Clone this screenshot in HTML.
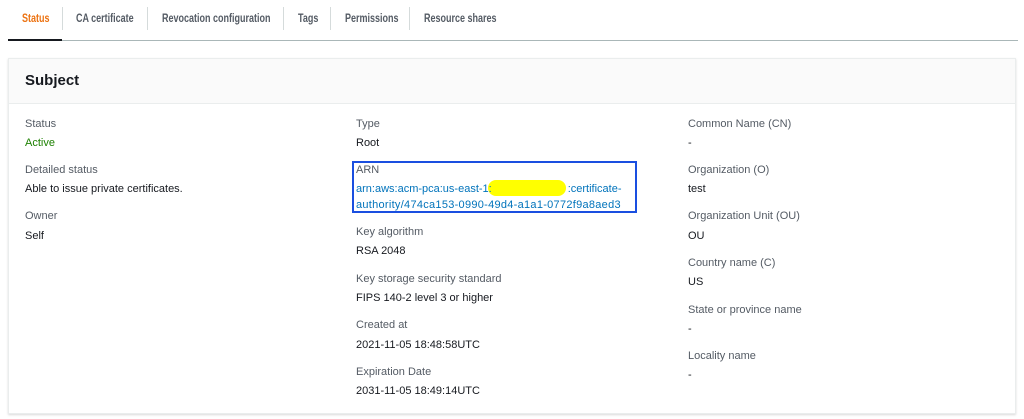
<!DOCTYPE html><html><head><style>
body{margin:0;width:1024px;height:419px;background:#fff;font-family:"Liberation Sans",sans-serif;color:#16191f;position:relative;overflow:hidden}
.a{position:absolute;white-space:nowrap}
.tab{position:absolute;top:11px;font-size:12px;font-weight:bold;color:#545b64;transform:scaleX(0.75);transform-origin:left}
.sep{position:absolute;top:7px;width:1px;height:23px;background:#d5dbdb}
.l{font-size:11px;color:#545b64}
.v{font-size:11px;color:#16191f}
</style></head><body>
<div class="tab" style="left:22px;color:#ec7211">Status</div>
<div class="sep" style="left:62px"></div>
<div class="tab" style="left:76px">CA certificate</div>
<div class="sep" style="left:147px"></div>
<div class="tab" style="left:162px">Revocation configuration</div>
<div class="sep" style="left:283px"></div>
<div class="tab" style="left:298px">Tags</div>
<div class="sep" style="left:330px"></div>
<div class="tab" style="left:345px">Permissions</div>
<div class="sep" style="left:409px"></div>
<div class="tab" style="left:424px">Resource shares</div>
<div class="a" style="left:8px;top:40px;width:1010px;height:1px;background:#aab7b8"></div>
<div class="a" style="left:8px;top:39px;width:54px;height:2px;background:#16191f"></div>
<div class="a" style="left:8px;top:58px;width:1008px;height:356px;border:1px solid #eaeded;box-sizing:border-box;box-shadow:0 1px 2px rgba(0,0,0,.15)"></div>
<div class="a" style="left:9px;top:59px;width:1006px;height:44px;background:#fafafa;border-bottom:1px solid #eaeded"></div>
<div class="a" style="left:25px;top:72px;font-size:15px;font-weight:bold">Subject</div>

<div class="a l" style="left:25px;top:118px">Status</div>
<div class="a v" style="left:25px;top:137px;color:#1d8102">Active</div>
<div class="a l" style="left:25px;top:164px">Detailed status</div>
<div class="a v" style="left:25px;top:183px">Able to issue private certificates.</div>
<div class="a l" style="left:25px;top:210px">Owner</div>
<div class="a v" style="left:25px;top:230px">Self</div>

<div class="a l" style="left:356px;top:118px">Type</div>
<div class="a v" style="left:356px;top:137px">Root</div>
<div class="a" style="left:352px;top:161px;width:285px;height:52px;border:2px solid #1a4fe0;box-sizing:border-box"></div>
<div class="a l" style="left:356px;top:164px">ARN</div>
<div class="a" style="left:488px;top:180px;width:78px;height:16px;background:#ffff00;border-radius:8px"></div>
<div class="a v" style="left:356px;top:183px;color:#0073bb">arn:aws:acm-pca:us-east-1:<span style="display:inline-block;width:76px"></span>:certificate-</div>
<div class="a v" style="left:356px;top:199px;color:#0073bb;letter-spacing:0.28px">authority/474ca153-0990-49d4-a1a1-0772f9a8aed3</div>
<div class="a l" style="left:356px;top:226px">Key algorithm</div>
<div class="a v" style="left:356px;top:245px">RSA 2048</div>
<div class="a l" style="left:356px;top:273px">Key storage security standard</div>
<div class="a v" style="left:356px;top:292px">FIPS 140-2 level 3 or higher</div>
<div class="a l" style="left:356px;top:319px">Created at</div>
<div class="a v" style="left:356px;top:339px">2021-11-05 18:48:58UTC</div>
<div class="a l" style="left:356px;top:366px">Expiration Date</div>
<div class="a v" style="left:356px;top:385px">2031-11-05 18:49:14UTC</div>

<div class="a l" style="left:688px;top:118px">Common Name (CN)</div>
<div class="a v" style="left:688px;top:137px">-</div>
<div class="a l" style="left:688px;top:164px">Organization (O)</div>
<div class="a v" style="left:688px;top:183px">test</div>
<div class="a l" style="left:688px;top:210px">Organization Unit (OU)</div>
<div class="a v" style="left:688px;top:230px">OU</div>
<div class="a l" style="left:688px;top:257px">Country name (C)</div>
<div class="a v" style="left:688px;top:276px">US</div>
<div class="a l" style="left:688px;top:304px">State or province name</div>
<div class="a v" style="left:688px;top:323px">-</div>
<div class="a l" style="left:688px;top:350px">Locality name</div>
<div class="a v" style="left:688px;top:369px">-</div>
</body></html>
